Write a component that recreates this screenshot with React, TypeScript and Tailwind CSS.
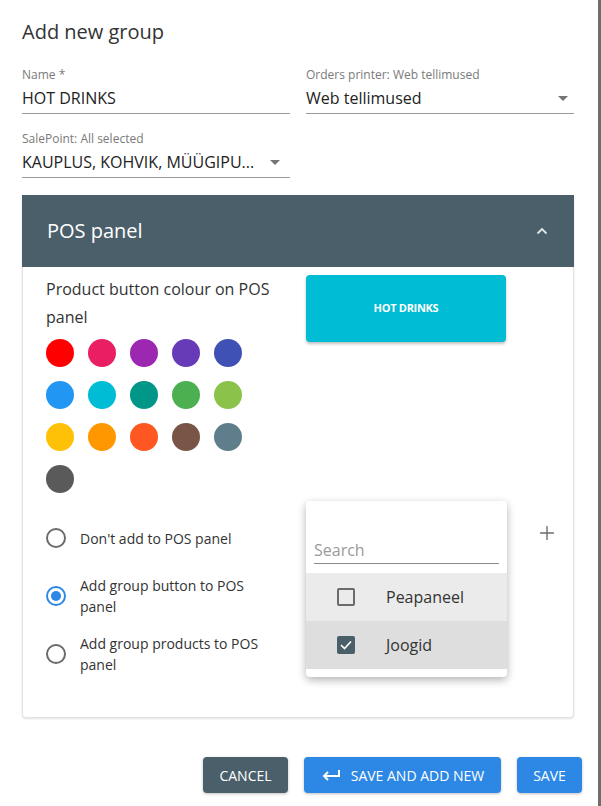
import { Plus } from "lucide-react";

const swatches = [
  "#ff0000",
  "#e91e63",
  "#9c27b0",
  "#673ab7",
  "#3f51b5",
  "#2196f3",
  "#00bcd4",
  "#009688",
  "#4caf50",
  "#8bc34a",
  "#ffc107",
  "#ff9800",
  "#ff5722",
  "#795548",
  "#607d8b",
  "#5a5a5a",
];

function Caret() {
  return (
    <svg width="10" height="5" viewBox="0 0 10 5" className="shrink-0">
      <path d="M0 0h10L5 5z" fill="#757575" />
    </svg>
  );
}

function Field({
  label,
  value,
  select,
}: {
  label: string;
  value: string;
  select?: boolean;
}) {
  return (
    <div className="flex flex-col">
      <span className="text-[12px] leading-[14px] text-[#7a7a7a]">{label}</span>
      <div className="mt-[4px] flex items-center justify-between border-b border-[#9a9a9a] pb-[3px] pr-[6px]">
        <span className="text-[16px] leading-[24px] text-[#222]">{value}</span>
        {select && <Caret />}
      </div>
    </div>
  );
}

function Radio({ label, checked }: { label: React.ReactNode; checked?: boolean }) {
  return (
    <div className="flex h-[58px] items-center gap-[14px]">
      <span
        className={
          checked
            ? "flex h-[20px] w-[20px] shrink-0 items-center justify-center rounded-full border-2 border-[#2d88e5]"
            : "flex h-[20px] w-[20px] shrink-0 items-center justify-center rounded-full border-2 border-[#6b6b6b]"
        }
      >
        {checked && <span className="h-[10px] w-[10px] rounded-full bg-[#2d88e5]" />}
      </span>
      <span className="text-[14px] leading-[21px] text-[#333]">{label}</span>
    </div>
  );
}

export default function App() {
  return (
    <div
      className="flex h-[806px] w-[601px] bg-white"
      style={{ fontFamily: '"Open Sans", "Noto Sans", sans-serif' }}
    >
      <div className="flex flex-1 flex-col">
        <div className="flex flex-col pl-[22px] pr-[24px] pt-[18px]">
          <h1 className="text-[20px] leading-[28px] text-[#333]">Add new group</h1>

          <div className="mt-[22px] grid grid-cols-2 gap-x-[16px] gap-y-[18px]">
            <Field label="Name *" value="HOT DRINKS" />
            <Field label="Orders printer: Web tellimused" value="Web tellimused" select />
            <div className="flex flex-col">
              <span className="text-[12px] leading-[14px] text-[#7a7a7a]">SalePoint: All selected</span>
              <div className="mt-[4px] flex items-center gap-[16px] border-b border-[#9a9a9a] pb-[3px]">
                <span className="text-[16px] leading-[24px] text-[#222]">KAUPLUS, KOHVIK, MÜÜGIPU...</span>
                <Caret />
              </div>
            </div>
          </div>

          <div className="mt-[17px] rounded-b-[4px] border border-t-0 border-[#e2e2e2] shadow-[0_1px_2px_rgba(0,0,0,0.12)]">
            <div className="-mx-px flex h-[72px] items-center justify-between bg-[#4b5f6a] pl-[25px] pr-[26px]">
              <span className="text-[20px] text-white">POS panel</span>
              <svg width="12" height="8" viewBox="0 0 12 8">
                <path d="M1.5 6.5L6 2l4.5 4.5" fill="none" stroke="#dfe5e8" strokeWidth="1.8" />
              </svg>
            </div>

            <div className="grid grid-cols-[244px_1fr] gap-x-[16px] pb-[34px] pl-[23px] pt-[8px]">
              <div className="flex flex-col">
                <p className="text-[16px] leading-[28px] text-[#333]">
                  Product button colour on POS panel
                </p>
                <div className="mt-[8px] grid w-fit grid-cols-[repeat(5,28px)] gap-[14px]">
                  {swatches.map((c) => (
                    <span key={c} className="h-[28px] w-[28px] rounded-full" style={{ backgroundColor: c }} />
                  ))}
                </div>
              </div>
              <div>
                <div className="flex h-[67px] w-[200px] items-center justify-center rounded-[4px] bg-[#00bcd4] shadow-[0_2px_3px_rgba(0,0,0,0.25)]">
                  <span className="text-[11px] font-bold tracking-[-0.3px] text-white">HOT DRINKS</span>
                </div>
              </div>

              <div className="mt-[16px] flex flex-col">
                <Radio label="Don't add to POS panel" />
                <Radio label={<>Add group button to POS<br />panel</>} checked />
                <Radio label={<>Add group products to POS<br />panel</>} />
              </div>
              <div className="relative mt-[16px] flex items-start">
                <div className="h-[40px] w-[201px]" />
                <Plus className="ml-[29px] mt-[13px] h-[22px] w-[22px] text-[#6b6b6b]" strokeWidth={1.5} />

                <div className="absolute left-0 top-[-8px] w-[201px] rounded-[4px] bg-white pb-[8px] shadow-[0_3px_8px_rgba(0,0,0,0.3)]">
                  <div className="px-[8px] pt-[37px]">
                    <div className="border-b border-[#8a8a8a] pb-[1px] text-[16px] leading-[24px] text-[#9a9a9a]">
                      Search
                    </div>
                  </div>
                  <div className="mt-[9px] flex h-[48px] items-center bg-[#ebebeb] pl-[31px]">
                    <span className="h-[18px] w-[18px] rounded-[2px] border-2 border-[#6b6b6b]" />
                    <span className="ml-[31px] text-[16px] text-[#333]">Peapaneel</span>
                  </div>
                  <div className="flex h-[48px] items-center bg-[#dedede] pl-[31px]">
                    <span className="flex h-[18px] w-[18px] items-center justify-center rounded-[2px] bg-[#4b5f6a]">
                      <svg width="12" height="10" viewBox="0 0 12 10">
                        <path d="M1 5l3.5 3.5L11 1.5" fill="none" stroke="white" strokeWidth="1.6" />
                      </svg>
                    </span>
                    <span className="ml-[31px] text-[16px] text-[#333]">Joogid</span>
                  </div>
                </div>
              </div>
            </div>
          </div>
        </div>

        <div className="mt-[39px] flex justify-end gap-[16px] pr-[16px]">
          <button className="h-[36px] w-[85px] rounded-[4px] bg-[#4b5f6a] text-[14px] text-white shadow-[0_1px_3px_rgba(0,0,0,0.25)]">
            CANCEL
          </button>
          <button className="flex h-[36px] w-[197px] items-center justify-center gap-[10px] rounded-[4px] bg-[#2d88e5] text-[14px] text-white shadow-[0_1px_3px_rgba(0,0,0,0.25)]">
            <svg width="20" height="12" viewBox="0 0 20 12">
              <path d="M18 1v6H3M7 3L3 7l4 4" fill="none" stroke="white" strokeWidth="2" />
            </svg>
            SAVE AND ADD NEW
          </button>
          <button className="h-[36px] w-[65px] rounded-[4px] bg-[#2d88e5] text-[14px] text-white shadow-[0_1px_3px_rgba(0,0,0,0.25)]">
            SAVE
          </button>
        </div>
      </div>
      <div className="w-[3px] bg-[#6e6e6e]" />
    </div>
  );
}
